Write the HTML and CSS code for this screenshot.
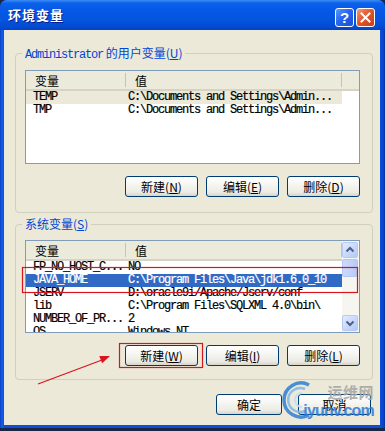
FILE: index.html
```html
<!DOCTYPE html>
<html lang="zh-CN">
<head>
    <meta charset="UTF-8">
    <meta name="viewport" content="width=device-width, initial-scale=1.0">
    <title>环境变量</title>
    <link rel="stylesheet" href="styles.css">
</head>
<body>
    <div class="screen">
        <div class="window">
            <div class="titlebar">
                <span class="title">环境变量</span>
                <div class="caption-buttons">
                    <span class="cap-btn help">?</span>
                    <span class="cap-btn close">
                        <svg viewBox="0 0 19 19" width="17" height="17">
                            <path d="M5 5 L14 14 M14 5 L5 14" stroke="#fff" stroke-width="2.2" stroke-linecap="square" />
                        </svg>
                    </span>
                </div>
            </div>

            <div class="dialog">
                <fieldset class="group user-group">
                    <legend><span class="mono">Administrator</span> 的用户变量(<u>U</u>)</legend>
                    <div class="listview">
                        <div class="lv-main">
                            <div class="lv-head">
                                <span class="hcol name">变量</span><i class="sep"></i><span class="hcol value">值</span><i class="sep"></i>
                            </div>
                            <div class="lv-row sel-inactive"><span class="c-name">TEMP</span><span class="c-value">C:\Documents and Settings\Admin...</span></div>
                            <div class="lv-row"><span class="c-name">TMP</span><span class="c-value">C:\Documents and Settings\Admin...</span></div>
                        </div>
                    </div>
                    <div class="btn-row">
                        <button class="btn">新建(<u>N</u>)</button>
                        <button class="btn">编辑(<u>E</u>)</button>
                        <button class="btn">删除(<u>D</u>)</button>
                    </div>
                </fieldset>

                <fieldset class="group system-group">
                    <legend>系统变量(<u>S</u>)</legend>
                    <div class="listview short">
                        <div class="lv-main">
                            <div class="lv-head">
                                <span class="hcol name">变量</span><i class="sep"></i><span class="hcol value">值</span><i class="sep"></i>
                            </div>
                            <div class="lv-row"><span class="c-name">FP_NO_HOST_C...</span><span class="c-value">NO</span></div>
                            <div class="lv-row sel"><span class="c-name">JAVA_HOME</span><span class="c-value">C:\Program Files\Java\jdk1.6.0_10</span></div>
                            <div class="lv-row"><span class="c-name">JSERV</span><span class="c-value">D:\oracle9i/Apache/Jserv/conf</span></div>
                            <div class="lv-row"><span class="c-name">lib</span><span class="c-value">C:\Program Files\SQLXML 4.0\bin\</span></div>
                            <div class="lv-row"><span class="c-name">NUMBER_OF_PR...</span><span class="c-value">2</span></div>
                            <div class="lv-row"><span class="c-name">OS</span><span class="c-value">Windows_NT</span></div>
                        </div>
                        <div class="scrollbar">
                            <span class="sb-btn">
                                <svg viewBox="0 0 14 14" width="14" height="14"><path d="M3.5 8.5 L7 5 L10.5 8.5" fill="none" stroke="#4D6185" stroke-width="2" /></svg>
                            </span>
                            <span class="sb-thumb"></span>
                            <span class="sb-track"></span>
                            <span class="sb-btn">
                                <svg viewBox="0 0 14 14" width="14" height="14"><path d="M3.5 5.5 L7 9 L10.5 5.5" fill="none" stroke="#4D6185" stroke-width="2" /></svg>
                            </span>
                        </div>
                    </div>
                    <div class="btn-row">
                        <button class="btn">新建(<u>W</u>)</button>
                        <button class="btn">编辑(<u>I</u>)</button>
                        <button class="btn">删除(<u>L</u>)</button>
                    </div>
                </fieldset>

                <div class="footer">
                    <button class="btn ok">确定</button>
                    <button class="btn">取消</button>
                </div>
            </div>
        </div>

        <!-- red marks drawn over the screenshot -->
        <svg class="marks" viewBox="0 0 385 431" width="385" height="431">
            <rect x="22.5" y="267.5" width="335" height="25" fill="none" stroke="#D8141E" stroke-width="1.2" />
            <rect x="119.5" y="343.5" width="83" height="24" fill="none" stroke="#D8141E" stroke-width="1.2" />
            <line x1="38" y1="384" x2="102" y2="360" stroke="#D8141E" stroke-width="1.2" />
            <polygon points="110,356 102.1,363.3 99.3,355.9" fill="#D8141E" />
            <g fill="none" opacity="0.85">
                <path d="M309 385 A17 17 0 1 0 309 415" stroke="#2F7FD4" stroke-width="3.5" />
                <path d="M305 389 A12 12 0 1 0 305 411" stroke="#7FB6EA" stroke-width="2.5" />
                <path d="M302 393 A7 7 0 1 0 302 407" stroke="#BFDDF6" stroke-width="2" />
            </g>
        </svg>
        <div class="watermark">
            <span class="wm-cn">运维网</span>
            <span class="wm-en">iyunv.com</span>
        </div>
    </div>
</body>
</html>
```

FILE: styles.css
```css
* {
    box-sizing: border-box;
}

html, body {
    margin: 0;
    padding: 0;
}

body {
    width: 385px;
    height: 431px;
    overflow: hidden;
    background-color: #1b2546;
    font-family: "Noto Sans CJK SC", sans-serif;
    font-size: 12px;
    color: #000;
}

.screen {
    position: relative;
    width: 385px;
    height: 431px;
}

.window {
    width: 385px;
    height: 428px;
    display: flex;
    flex-direction: column;
    background: linear-gradient(90deg, #0A3FC4 0, #1560E8 2px, #0B4ED8 4px, #0B4ED8 380px, #0A46CC 383px, #06329E 385px);
    border-radius: 7px 7px 0 0;
    overflow: hidden;
}

.titlebar {
    height: 30px;
    flex: none;
    display: flex;
    align-items: center;
    justify-content: space-between;
    padding: 0 10px 0 8px;
    background: linear-gradient(to bottom, #3C8DF5 0, #0C62EC 3px, #0659E6 9px, #0454DE 20px, #0349D0 28px, #0A3FB8 30px);
}

.title {
    color: #fff;
    font-weight: bold;
    font-size: 13px;
    letter-spacing: 1px;
    text-shadow: 1px 1px #0A1C8A;
    margin-top: -1px;
}

.caption-buttons {
    display: flex;
    gap: 2px;
    margin-top: 5px;
}

.cap-btn {
    width: 19px;
    height: 19px;
    border: 1px solid #fff;
    border-radius: 3px;
    display: flex;
    align-items: center;
    justify-content: center;
    color: #fff;
    font-family: "Liberation Sans", sans-serif;
    font-weight: bold;
    font-size: 15px;
}

.help {
    background: linear-gradient(135deg, #5C9BFF 0, #2766EE 45%, #1A4FD6 100%);
}

.close {
    background: linear-gradient(135deg, #F39A7E 0, #E2572D 45%, #C83A15 100%);
}

.dialog {
    flex: 1;
    margin: 0 5px 3px 4px;
    background-color: #ECE9D8;
    display: flex;
    flex-direction: column;
}

.group {
    margin: 16px 7px 0 11px;
    padding: 10px 12px 15px 9px;
    border: 1px solid #D0D0BF;
    border-radius: 4px;
    min-width: 0;
}

.system-group {
    margin-top: 4px;
    padding-top: 9px;
    padding-bottom: 13px;
}

.group legend {
    padding: 0 3px;
    margin-left: -3px;
    color: #0046D5;
    line-height: 14px;
    height: 14px;
}

.mono {
    font-family: "Liberation Mono", monospace;
    font-size: 12px;
    letter-spacing: -1.2px;
}

.listview {
    height: 94px;
    border: 1px solid #7F9DB9;
    background-color: #fff;
    display: flex;
    overflow: hidden;
}

.listview.short {
    height: 93px;
}

.lv-main {
    flex: 1;
    min-width: 0;
    overflow: hidden;
}

.lv-head {
    height: 20px;
    display: flex;
    align-items: center;
    background-color: #EBEADB;
    border-bottom: 2px solid #D6D3C4;
}

.hcol {
    padding-left: 9px;
}

.hcol.name {
    width: 99px;
}

.hcol.value {
    width: 215px;
}

.sep {
    width: 1px;
    height: 14px;
    background-color: #C7C5B2;
}

.lv-row {
    display: flex;
    width: 316px;
    height: 13px;
    line-height: 13px;
    font-family: "Liberation Mono", monospace;
    font-size: 12px;
    letter-spacing: -1.2px;
    white-space: nowrap;
    -webkit-text-stroke: 0.2px currentColor;
}

.c-name {
    width: 100px;
    padding-left: 7px;
    overflow: hidden;
}

.c-value {
    width: 216px;
    padding-left: 2px;
    overflow: hidden;
}

.sel-inactive {
    background-color: #ECE9D8;
}

.sel {
    background-color: #316AC5;
    color: #fff;
}

.scrollbar {
    width: 17px;
    flex: none;
    display: flex;
    flex-direction: column;
    padding: 1px 1px 1px 0;
    background-color: #F6F5F0;
}

.sb-btn {
    height: 16px;
    flex: none;
    display: flex;
    align-items: center;
    justify-content: center;
    border: 1px solid #B7CAF5;
    border-radius: 2px;
    background: linear-gradient(135deg, #E2EBFE 0, #C6D6FB 60%, #B3C8F6 100%);
}

.sb-thumb {
    height: 18px;
    flex: none;
    margin-top: 1px;
    border: 1px solid #B4C6F4;
    border-radius: 2px;
    background: linear-gradient(90deg, #CCD9FC 0, #C2D1F9 60%, #B6C8F5 100%);
}

.sb-track {
    flex: 1;
}

.btn-row {
    display: flex;
    justify-content: flex-end;
    gap: 8px;
    margin-top: 12px;
}

.btn {
    width: 73px;
    height: 21px;
    padding: 0;
    border: 1px solid #003C74;
    border-radius: 3px;
    background: linear-gradient(to bottom, #FFFFFF 0, #F6F6F2 40%, #ECEBE5 80%, #D8D4C8 100%);
    font-family: "Noto Sans CJK SC", sans-serif;
    font-size: 12px;
    line-height: 19px;
    color: #000;
}

.btn u {
    text-underline-offset: 1px;
}

.footer {
    display: flex;
    justify-content: flex-end;
    gap: 16px;
    margin-top: 14px;
    padding-right: 9px;
}

.btn.ok {
    width: 66px;
}

.marks {
    position: absolute;
    top: 0;
    left: 0;
    pointer-events: none;
}

.watermark {
    position: absolute;
    left: 304px;
    top: 382px;
    width: 70px;
    display: flex;
    flex-direction: column;
    align-items: flex-end;
    pointer-events: none;
    opacity: 0.85;
}

.wm-cn {
    font-size: 15px;
    line-height: 20px;
    font-weight: bold;
    color: #A3A3A3;
    letter-spacing: 0.5px;
}

.wm-en {
    font-family: "Liberation Sans", sans-serif;
    font-size: 16px;
    line-height: 18px;
    font-weight: bold;
    color: #2C7BD8;
    letter-spacing: -0.8px;
}
```
